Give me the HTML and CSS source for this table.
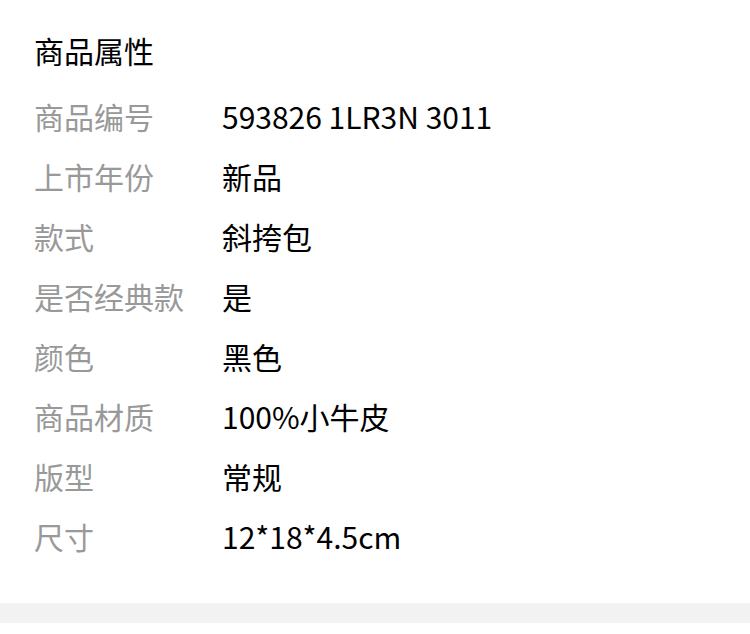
FILE: index.html
```html
<!DOCTYPE html>
<html lang="zh-CN">
<head>
  <meta charset="UTF-8">
  <title>商品属性</title>
  <meta name="viewport" content="width=device-width, initial-scale=1">
  <link rel="stylesheet" href="styles.css">
</head>
<body>
  <div class="attrs">
    <h2 class="title">商品属性</h2>
    <div class="row"><span class="label">商品编号</span><span class="value">593826 1LR3N 3011</span></div>
    <div class="row"><span class="label">上市年份</span><span class="value">新品</span></div>
    <div class="row"><span class="label">款式</span><span class="value">斜挎包</span></div>
    <div class="row"><span class="label">是否经典款</span><span class="value">是</span></div>
    <div class="row"><span class="label">颜色</span><span class="value">黑色</span></div>
    <div class="row"><span class="label">商品材质</span><span class="value">100%小牛皮</span></div>
    <div class="row"><span class="label">版型</span><span class="value">常规</span></div>
    <div class="row"><span class="label">尺寸</span><span class="value">12*18*4.5cm</span></div>
  </div>
  <div class="divider"></div>
</body>
</html>
```

FILE: styles.css
```css
body {
  margin: 0;
  background: #fff;
  font-family: "Noto Sans CJK SC", "Noto Sans", sans-serif;
  color: #000;
}
.attrs {
  padding: 20px 34px 0;
}
.title {
  margin: 0 0 6px;
  font-size: 30px;
  font-weight: normal;
  line-height: 60px;
}
.row {
  display: flex;
  font-size: 30px;
  line-height: 60px;
}
.label {
  width: 188px;
  flex-shrink: 0;
  color: #999;
}
.value {
  color: #000;
}
.divider {
  margin-top: 37px;
  height: 20px;
  background: #f2f2f2;
}
```
